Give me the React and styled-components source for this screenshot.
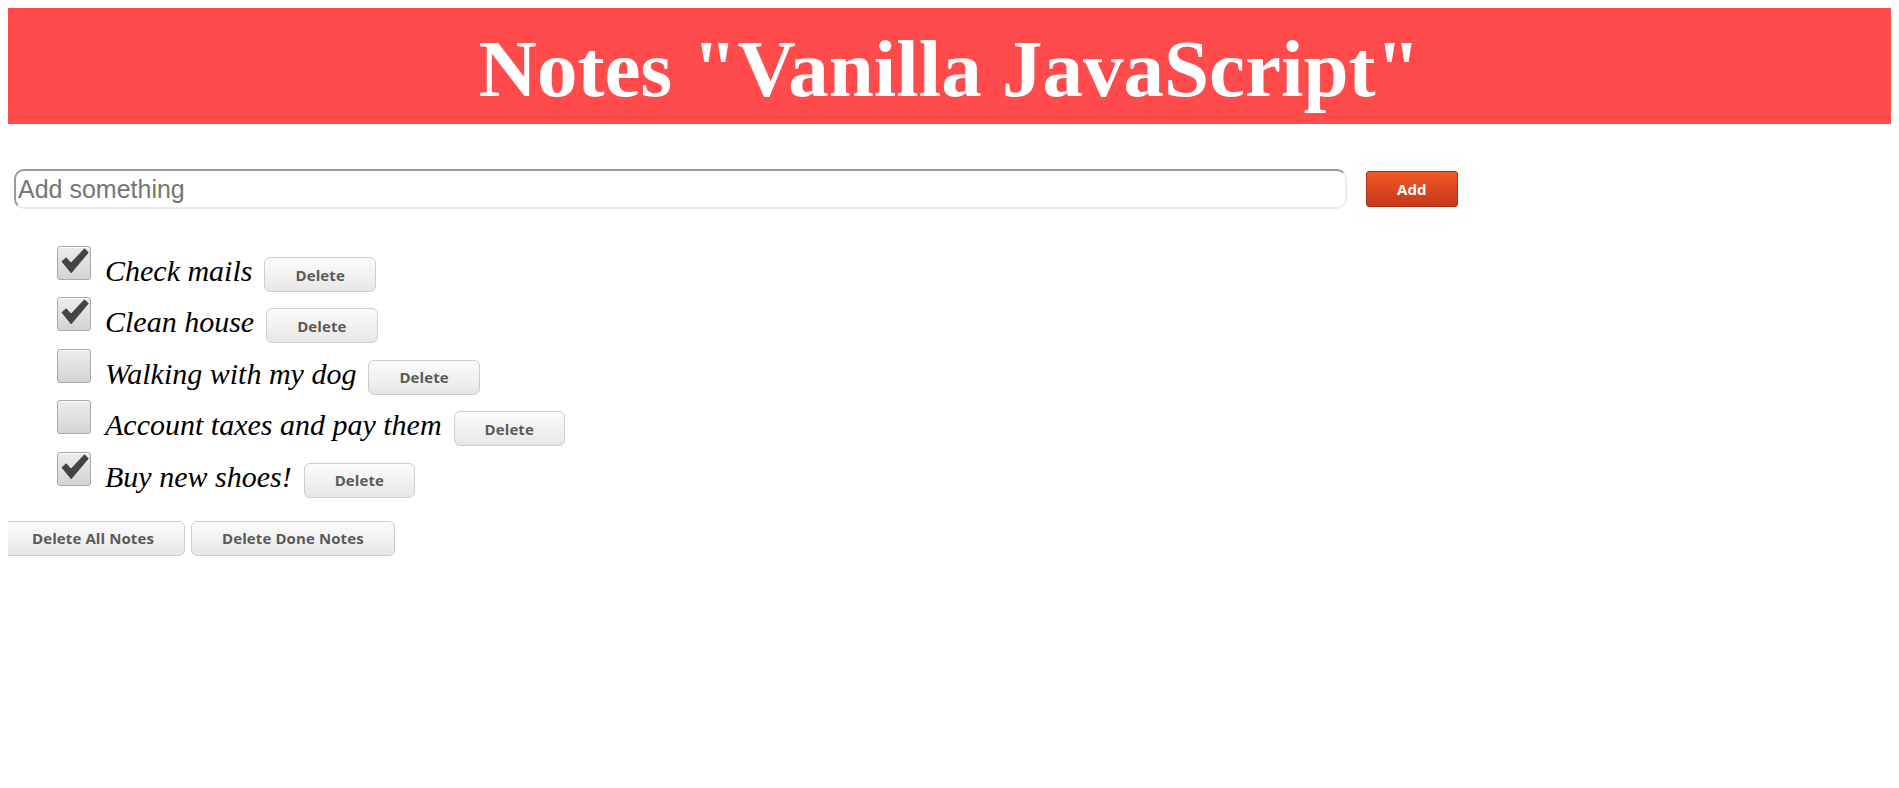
import React, { useState } from "react";
import styled, { createGlobalStyle } from "styled-components";

const GlobalStyle = createGlobalStyle`
  html, body { background: #ffffff; }
  body { margin: 8px; font-family: "Liberation Serif", serif; }
  * { box-sizing: border-box; }
`;

const Header = styled.header`
  background: #ff4b4b;
  height: 116px;
  display: flex;
  justify-content: center;
  align-items: flex-start;
  padding-top: 15px;
`;

const Title = styled.h1`
  margin: 0;
  font-family: "Liberation Serif", "Times New Roman", serif;
  font-weight: 700;
  font-size: 81px;
  line-height: normal;
  color: #ffffff;
`;

const Form = styled.form`
  display: flex;
  align-items: center;
  gap: 19px;
  margin-top: 45px;
  padding-left: 6px;
`;

const Input = styled.input`
  width: 1333px;
  height: 40px;
  border: 2px solid;
  border-color: #9a9a9a #ebebeb #ebebeb #9a9a9a;
  border-radius: 10px;
  padding: 0 2px;
  font-family: "Liberation Sans", Arial, sans-serif;
  font-size: 25px;
  color: #333;
  outline: none;
  &::placeholder { color: #767676; }
`;

const Button = styled.button`
  height: ${(p) => (p.$tall ? "36px" : "35px")};
  padding: 0 30px;
  border-radius: ${(p) => (p.$primary ? "3px" : "6px")};
  border: 1px solid ${(p) => (p.$primary ? "#a83217" : "#cdcdcd")};
  background: ${(p) =>
    p.$primary
      ? "linear-gradient(to bottom, #f25b2a 0%, #d9461f 55%, #c7381a 100%)"
      : "linear-gradient(to bottom, #fbfbfb 0%, #f1f1f1 55%, #e6e6e6 100%)"};
  color: ${(p) => (p.$primary ? "#ffffff" : "#5a5a5a")};
  font-family: "Open Sans", Lato, sans-serif;
  font-weight: 700;
  font-size: 15px;
  letter-spacing: 0.1px;
  white-space: nowrap;
  cursor: pointer;
  box-shadow: ${(p) =>
    p.$primary ? "0 0 22px 6px rgba(150, 110, 90, 0.035)" : "none"};
`;

const List = styled.ul`
  list-style: none;
  margin: 37px 0 0;
  padding: 0 0 0 49px;
  display: flex;
  flex-direction: column;
  gap: 5.4px;
`;

const Row = styled.li`
  display: flex;
  align-items: flex-start;
  height: 46px;
`;

const Box = styled.span`
  width: 34px;
  height: 34px;
  flex: none;
  border: 1px solid #a9a9a9;
  border-radius: 3px;
  background: linear-gradient(to bottom, #ececec 0%, #dedede 60%, #d3d3d3 100%);
  box-shadow: inset 0 1px 0 rgba(255, 255, 255, 0.7);
  position: relative;
  cursor: pointer;
`;

const Check = styled.svg`
  position: absolute;
  left: 3px;
  top: 1px;
`;

const Label = styled.span`
  font-family: "Liberation Serif", "Times New Roman", serif;
  font-style: italic;
  font-size: 30px;
  line-height: normal;
  color: #000;
  margin: 8px 12px 0 14px;
`;

const RowButton = styled(Button)`
  margin-top: 11px;
`;

const Footer = styled.div`
  display: flex;
  gap: 6px;
  margin-top: 23px;
  margin-left: -7px;
`;

const initial = [
  { text: "Check mails", done: true },
  { text: "Clean house", done: true },
  { text: "Walking with my dog", done: false },
  { text: "Account taxes and pay them", done: false },
  { text: "Buy new shoes!", done: true },
];

export default function App() {
  const [notes, setNotes] = useState(initial);
  const [value, setValue] = useState("");

  const toggle = (i) =>
    setNotes((n) => n.map((x, j) => (j === i ? { ...x, done: !x.done } : x)));

  return (
    <>
      <GlobalStyle />
      <Header>
        <Title>Notes "Vanilla JavaScript"</Title>
      </Header>
      <Form
        onSubmit={(e) => {
          e.preventDefault();
          if (value.trim()) {
            setNotes((n) => [...n, { text: value, done: false }]);
            setValue("");
          }
        }}
      >
        <Input
          placeholder="Add something"
          value={value}
          onChange={(e) => setValue(e.target.value)}
        />
        <Button $primary $tall type="submit">
          Add
        </Button>
      </Form>
      <List>
        {notes.map((n, i) => (
          <Row key={i}>
            <Box onClick={() => toggle(i)}>
              {n.done && (
                <Check width="28" height="26" viewBox="0 0 28 26">
                  <path
                    d="M1 13.5 L5.2 9.8 L10 15 L23.5 0.8 L27.2 4.6 L10.2 24.8 Z"
                    fill="#444444"
                    stroke="#444444"
                    strokeWidth="1"
                    strokeLinejoin="round"
                  />
                </Check>
              )}
            </Box>
            <Label>{n.text}</Label>
            <RowButton
              onClick={() => setNotes((x) => x.filter((_, j) => j !== i))}
            >
              Delete
            </RowButton>
          </Row>
        ))}
      </List>
      <Footer>
        <Button onClick={() => setNotes([])}>Delete All Notes</Button>
        <Button onClick={() => setNotes((x) => x.filter((y) => !y.done))}>
          Delete Done Notes
        </Button>
      </Footer>
    </>
  );
}
